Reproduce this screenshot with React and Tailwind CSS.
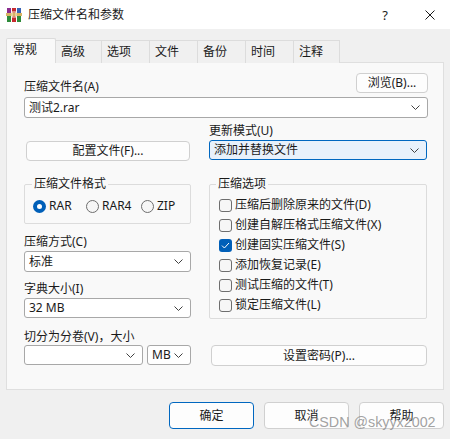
import React from 'react'

const Chevron = () => (
  <svg width="9" height="5" viewBox="0 0 9 5" className="shrink-0">
    <path d="M0.5 0.5 L4.5 4.5 L8.5 0.5" fill="none" stroke="#404040" strokeWidth="1" />
  </svg>
)

function Combo({ text, className = '', active }) {
  return (
    <div
      className={
        'flex items-center justify-between rounded-[3px] border pl-[4px] pr-[7px] ' +
        (active ? 'border-[#0067c0] bg-[#e8f1fb] ' : 'border-[#a8a8a8] bg-white ') +
        className
      }
    >
      <span className="leading-[16px] whitespace-nowrap">{text}</span>
      <Chevron />
    </div>
  )
}

function Btn({ children, className = '', primary }) {
  return (
    <div
      className={
        'flex items-center justify-center rounded-[4px] border bg-[#fdfdfd] leading-[16px] ' +
        (primary ? 'border-[#0067c0] ' : 'border-[#d0d0d0] ') +
        className
      }
    >
      {children}
    </div>
  )
}

function Radio({ label, checked, className = '' }) {
  return (
    <div className={'flex items-center gap-[3px] ' + className}>
      {checked ? (
        <span className="w-[13px] h-[13px] rounded-full bg-[#005fb8] flex items-center justify-center">
          <span className="w-[5px] h-[5px] rounded-full bg-white" />
        </span>
      ) : (
        <span className="w-[13px] h-[13px] rounded-full border border-[#6e6e6e] bg-[#f6f6f6]" />
      )}
      <span className="leading-[16px]">{label}</span>
    </div>
  )
}

function Check({ label, checked }) {
  return (
    <div className="h-[20px] flex items-center gap-[3px] pl-[9px]">
      {checked ? (
        <span className="w-[13px] h-[13px] rounded-[3px] bg-[#005fb8] flex items-center justify-center">
          <svg width="9" height="7" viewBox="0 0 9 7">
            <path d="M1 3.6 L3.4 6 L8 1" fill="none" stroke="white" strokeWidth="1" />
          </svg>
        </span>
      ) : (
        <span className="w-[13px] h-[13px] rounded-[3px] border border-[#6e6e6e] bg-[#f6f6f6]" />
      )}
      <span className="leading-[16px]">{label}</span>
    </div>
  )
}

const tabs = [
  ['高级', 'w-[46px]'],
  ['选项', 'w-[48px]'],
  ['文件', 'w-[48px]'],
  ['备份', 'w-[48px]'],
  ['时间', 'w-[48px]'],
  ['注释', 'w-[46px]'],
]

const options = [
  ['压缩后删除原来的文件(D)', false],
  ['创建自解压格式压缩文件(X)', false],
  ['创建固实压缩文件(S)', true],
  ['添加恢复记录(E)', false],
  ['测试压缩的文件(T)', false],
  ['锁定压缩文件(L)', false],
]

export default function App() {
  return (
    <div className="w-[450px] h-[439px] bg-[#f0f0f0] relative overflow-hidden text-[12px] text-[#1a1a1a] font-['Noto_Sans','Noto_Sans_CJK_SC',sans-serif]">
      {/* title bar */}
      <div className="h-[29px] bg-white flex items-center">
        <svg width="16" height="16" viewBox="0 0 16 16" className="ml-[6px]">
          <rect x="1" y="1" width="4" height="7" fill="#8b2c8f" />
          <rect x="1" y="8" width="4" height="7" fill="#2e8b3a" />
          <rect x="6" y="1" width="4" height="14" fill="#c62a2f" />
          <rect x="11" y="1" width="4" height="7" fill="#3763b5" />
          <rect x="11" y="8" width="4" height="7" fill="#2e8b3a" />
          <rect x="0" y="6" width="16" height="3" fill="#d8b465" />
          <rect x="6" y="5" width="4" height="5" fill="none" stroke="#f4ead0" strokeWidth="1" />
        </svg>
        <span className="ml-[6px] leading-[16px]">压缩文件名和参数</span>
        <span className="ml-auto mr-[37px] text-[13px] leading-[16px]">?</span>
        <svg width="10" height="10" viewBox="0 0 10 10" className="mr-[15px]">
          <path d="M0.5 0.5 L9.5 9.5 M9.5 0.5 L0.5 9.5" stroke="#1a1a1a" strokeWidth="1" />
        </svg>
      </div>

      {/* tabs */}
      <div className="h-[34px] pt-[9px] px-[6px] flex items-end">
        <div className="relative z-10 w-[50px] h-[25px] bg-[#f9f9f9] border border-b-0 border-[#dcdcdc] rounded-t-[2px] pl-[6px] pt-[3px] leading-[16px]">
          常规
        </div>
        {tabs.map(([t, w]) => (
          <div
            key={t}
            className={w + ' h-[23px] bg-[#f0f0f0] border border-l-0 border-b-0 border-[#dcdcdc] pl-[5px] pt-[3px] leading-[16px]'}
          >
            {t}
          </div>
        ))}
      </div>

      {/* panel */}
      <div className="mx-[6px] -mt-px h-[328px] border border-[#dfdfdf] bg-[#f9f9f9] pl-[17px] pr-[15px] pt-[10px]">
        <div className="h-[20px] flex items-end justify-between">
          <span className="leading-[16px] mb-[-2px]">压缩文件名(A)</span>
          <Btn className="w-[72px] h-[20px]">浏览(B)...</Btn>
        </div>
        <Combo text="测试2.rar" className="mt-[4px] h-[21px]" />

        <div className="mt-[6px] flex gap-[18px]">
          <div className="w-[167px]">
            <Btn className="mt-[17px] ml-[2px] w-[164px] h-[20px]">配置文件(F)...</Btn>
          </div>
          <div className="w-[218px]">
            <div className="leading-[14px]">更新模式(U)</div>
            <Combo text="添加并替换文件" active className="mt-[2px] h-[20px]" />
          </div>
        </div>

        <div className="mt-[23px] flex gap-[18px]">
          {/* left column */}
          <div className="w-[167px] flex flex-col">
            <div className="relative h-[40px] border border-[#dcdcdc] rounded-[2px]">
              <span className="absolute left-[7px] -top-[9px] px-[2px] bg-[#f9f9f9] leading-[16px]">压缩文件格式</span>
              <div className="h-full flex items-center pl-[8px] pt-[4px]">
                <Radio label="RAR" checked className="w-[53px]" />
                <Radio label="RAR4" className="w-[55px]" />
                <Radio label="ZIP" />
              </div>
            </div>
            <div className="mt-[11px] leading-[14px]">压缩方式(C)</div>
            <Combo text="标准" className="mt-[2px] h-[21px]" />
            <div className="mt-[10px] leading-[14px]">字典大小(I)</div>
            <Combo text="32 MB" className="mt-[2px] h-[20px]" />
            <div className="mt-[12px] leading-[14px]">切分为分卷(V)，大小</div>
            <div className="mt-[1px] flex gap-[4px]">
              <Combo text="" className="w-[119px] h-[20px]" />
              <Combo text="MB" className="w-[44px] h-[20px]" />
            </div>
          </div>

          {/* right column */}
          <div className="w-[218px] flex flex-col">
            <div className="relative h-[135px] border border-[#dcdcdc] rounded-[2px] pt-[10px]">
              <span className="absolute left-[6px] -top-[9px] px-[2px] bg-[#f9f9f9] leading-[16px]">压缩选项</span>
              {options.map(([l, c]) => (
                <Check key={l} label={l} checked={c} />
              ))}
            </div>
            <Btn className="mt-[26px] ml-[2px] w-[216px] h-[21px]">设置密码(P)...</Btn>
          </div>
        </div>
      </div>

      {/* bottom buttons */}
      <div className="mt-[12px] pr-[6px] flex justify-end gap-[10px]">
        <Btn primary className="w-[85px] h-[27px]">确定</Btn>
        <Btn className="w-[85px] h-[27px]">取消</Btn>
        <Btn className="w-[85px] h-[27px]">帮助</Btn>
      </div>

      <div className="absolute left-[309px] top-[413px] text-[14.3px] leading-[18px] text-[#8a8a8a]/80 font-['Liberation_Sans',sans-serif]">
        CSDN @skyyx2002
      </div>
    </div>
  )
}
